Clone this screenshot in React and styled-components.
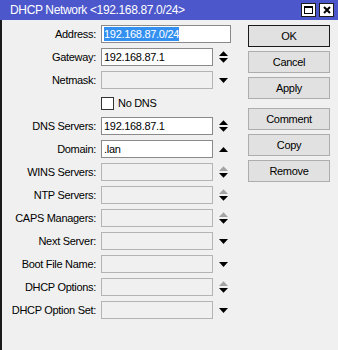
import React from 'react';
import styled, { createGlobalStyle } from 'styled-components';

const GlobalStyle = createGlobalStyle`
  html, body {
    margin: 0;
    padding: 0;
    background: #f0f0f0;
  }
  body {
    font-family: "Liberation Sans", Arial, sans-serif;
    font-size: 11px;
    color: #000;
  }
`;

const Window = styled.div`
  width: 338px;
  height: 350px;
  display: flex;
  flex-direction: column;
  background: #f0f0f0;
  overflow: hidden;
`;

const TitleBar = styled.div`
  height: 20px;
  flex: none;
  display: flex;
  align-items: center;
  justify-content: space-between;
  background: #4b57cb;
  color: #fff;
  padding-left: 10px;
  padding-right: 4px;
  font-size: 12px;
  letter-spacing: -0.35px;
`;

const TitleButtons = styled.div`
  display: flex;
  gap: 3px;
`;

const TitleButton = styled.div`
  width: 13px;
  height: 12px;
  background: #fff;
  border: 1px solid #1c1c1c;
  display: flex;
  align-items: center;
  justify-content: center;
`;

const Body = styled.div`
  flex: 1;
  display: flex;
  border-left: 2px solid #1a1a1a;
  padding-top: 5px;
`;

const Form = styled.div`
  width: 232px;
  display: flex;
  flex-direction: column;
  gap: 5px;
`;

const Row = styled.div`
  height: 18px;
  display: flex;
  align-items: center;
`;

const Label = styled.div`
  width: 94px;
  flex: none;
  text-align: right;
  letter-spacing: -0.3px;
  white-space: nowrap;
`;

const Field = styled.div`
  margin-left: 5px;
  width: ${(p) => (p.$wide ? 130 : 112)}px;
  height: 18px;
  box-sizing: border-box;
  flex: none;
  border: 1px solid ${(p) => (p.$filled ? '#8a8a8a' : '#b4b4b4')};
  background: ${(p) => (p.$filled ? '#fff' : '#f0f0f0')};
  display: flex;
  align-items: center;
  padding-left: 2px;
  letter-spacing: -0.3px;
  white-space: nowrap;
`;

const Selected = styled.span`
  background: #3390f0;
  color: #fff;
  padding: 1px 0;
`;

const ArrowCell = styled.div`
  margin-left: 5px;
  width: 10px;
  height: 18px;
  display: flex;
  align-items: center;
  justify-content: center;
`;

const CheckRow = styled(Row)`
  padding-left: 99px;
  gap: 4px;
`;

const CheckBox = styled.div`
  width: 13px;
  height: 13px;
  box-sizing: border-box;
  border: 1px solid #333;
  background: #fff;
`;

const CheckText = styled.span`
  letter-spacing: -0.3px;
`;

const Buttons = styled.div`
  margin-left: 14px;
  width: 82px;
  display: flex;
  flex-direction: column;
  gap: 4px;
`;

const Button = styled.div`
  height: 22px;
  box-sizing: border-box;
  border: 1px solid ${(p) => (p.$default ? '#1a1a1a' : '#adadad')};
  background: #e1e1e1;
  display: flex;
  align-items: center;
  justify-content: center;
  letter-spacing: -0.3px;
  margin-top: ${(p) => (p.$spaced ? 5 : 0)}px;
`;

function Arrow({ kind }) {
  if (kind === 'down') {
    return (
      <svg width="9" height="5" viewBox="0 0 9 5">
        <polygon points="0,0 9,0 4.5,5" fill="#000" />
      </svg>
    );
  }
  if (kind === 'up') {
    return (
      <svg width="9" height="5" viewBox="0 0 9 5">
        <polygon points="0,5 4.5,0 9,5" fill="#000" />
      </svg>
    );
  }
  // updown, grayup: both triangles, the upper one greyed when disabled
  return (
    <svg width="9" height="12" viewBox="0 0 9 12">
      <polygon points="0,5 4.5,0.3 9,5" fill={kind === 'grayup' ? '#a3a3a3' : '#000'} />
      <polygon points="0,7 9,7 4.5,11.7" fill="#000" />
    </svg>
  );
}

const rows = [
  { label: 'Gateway:', value: '192.168.87.1', arrow: 'updown' },
  { label: 'Netmask:', arrow: 'down' },
];

const rows2 = [
  { label: 'DNS Servers:', value: '192.168.87.1', arrow: 'updown' },
  { label: 'Domain:', value: '.lan', arrow: 'up' },
  { label: 'WINS Servers:', arrow: 'grayup' },
  { label: 'NTP Servers:', arrow: 'grayup' },
  { label: 'CAPS Managers:', arrow: 'grayup' },
  { label: 'Next Server:', arrow: 'down' },
  { label: 'Boot File Name:', arrow: 'down' },
  { label: 'DHCP Options:', arrow: 'grayup' },
  { label: 'DHCP Option Set:', arrow: 'down' },
];

function FieldRow({ label, value, arrow }) {
  return (
    <Row>
      <Label>{label}</Label>
      <Field $filled={value !== undefined}>{value}</Field>
      <ArrowCell>
        <Arrow kind={arrow} />
      </ArrowCell>
    </Row>
  );
}

export default function App() {
  return (
    <>
      <GlobalStyle />
      <Window>
        <TitleBar>
          <span>DHCP Network &lt;192.168.87.0/24&gt;</span>
          <TitleButtons>
            <TitleButton>
              <svg width="9" height="8" viewBox="0 0 9 8">
                <rect x="0.5" y="0.5" width="8" height="7" fill="none" stroke="#000" />
                <rect x="0" y="0" width="9" height="2" fill="#000" />
              </svg>
            </TitleButton>
            <TitleButton>
              <svg width="8" height="8" viewBox="0 0 8 8">
                <path d="M1 1 L7 7 M7 1 L1 7" stroke="#000" strokeWidth="2" />
              </svg>
            </TitleButton>
          </TitleButtons>
        </TitleBar>
        <Body>
          <Form>
            <Row>
              <Label>Address:</Label>
              <Field $filled $wide>
                <Selected>192.168.87.0/24</Selected>
              </Field>
            </Row>
            {rows.map((r) => (
              <FieldRow key={r.label} {...r} />
            ))}
            <CheckRow>
              <CheckBox />
              <CheckText>No DNS</CheckText>
            </CheckRow>
            {rows2.map((r) => (
              <FieldRow key={r.label} {...r} />
            ))}
          </Form>
          <Buttons>
            <Button $default>OK</Button>
            <Button>Cancel</Button>
            <Button>Apply</Button>
            <Button $spaced>Comment</Button>
            <Button>Copy</Button>
            <Button>Remove</Button>
          </Buttons>
        </Body>
      </Window>
    </>
  );
}
